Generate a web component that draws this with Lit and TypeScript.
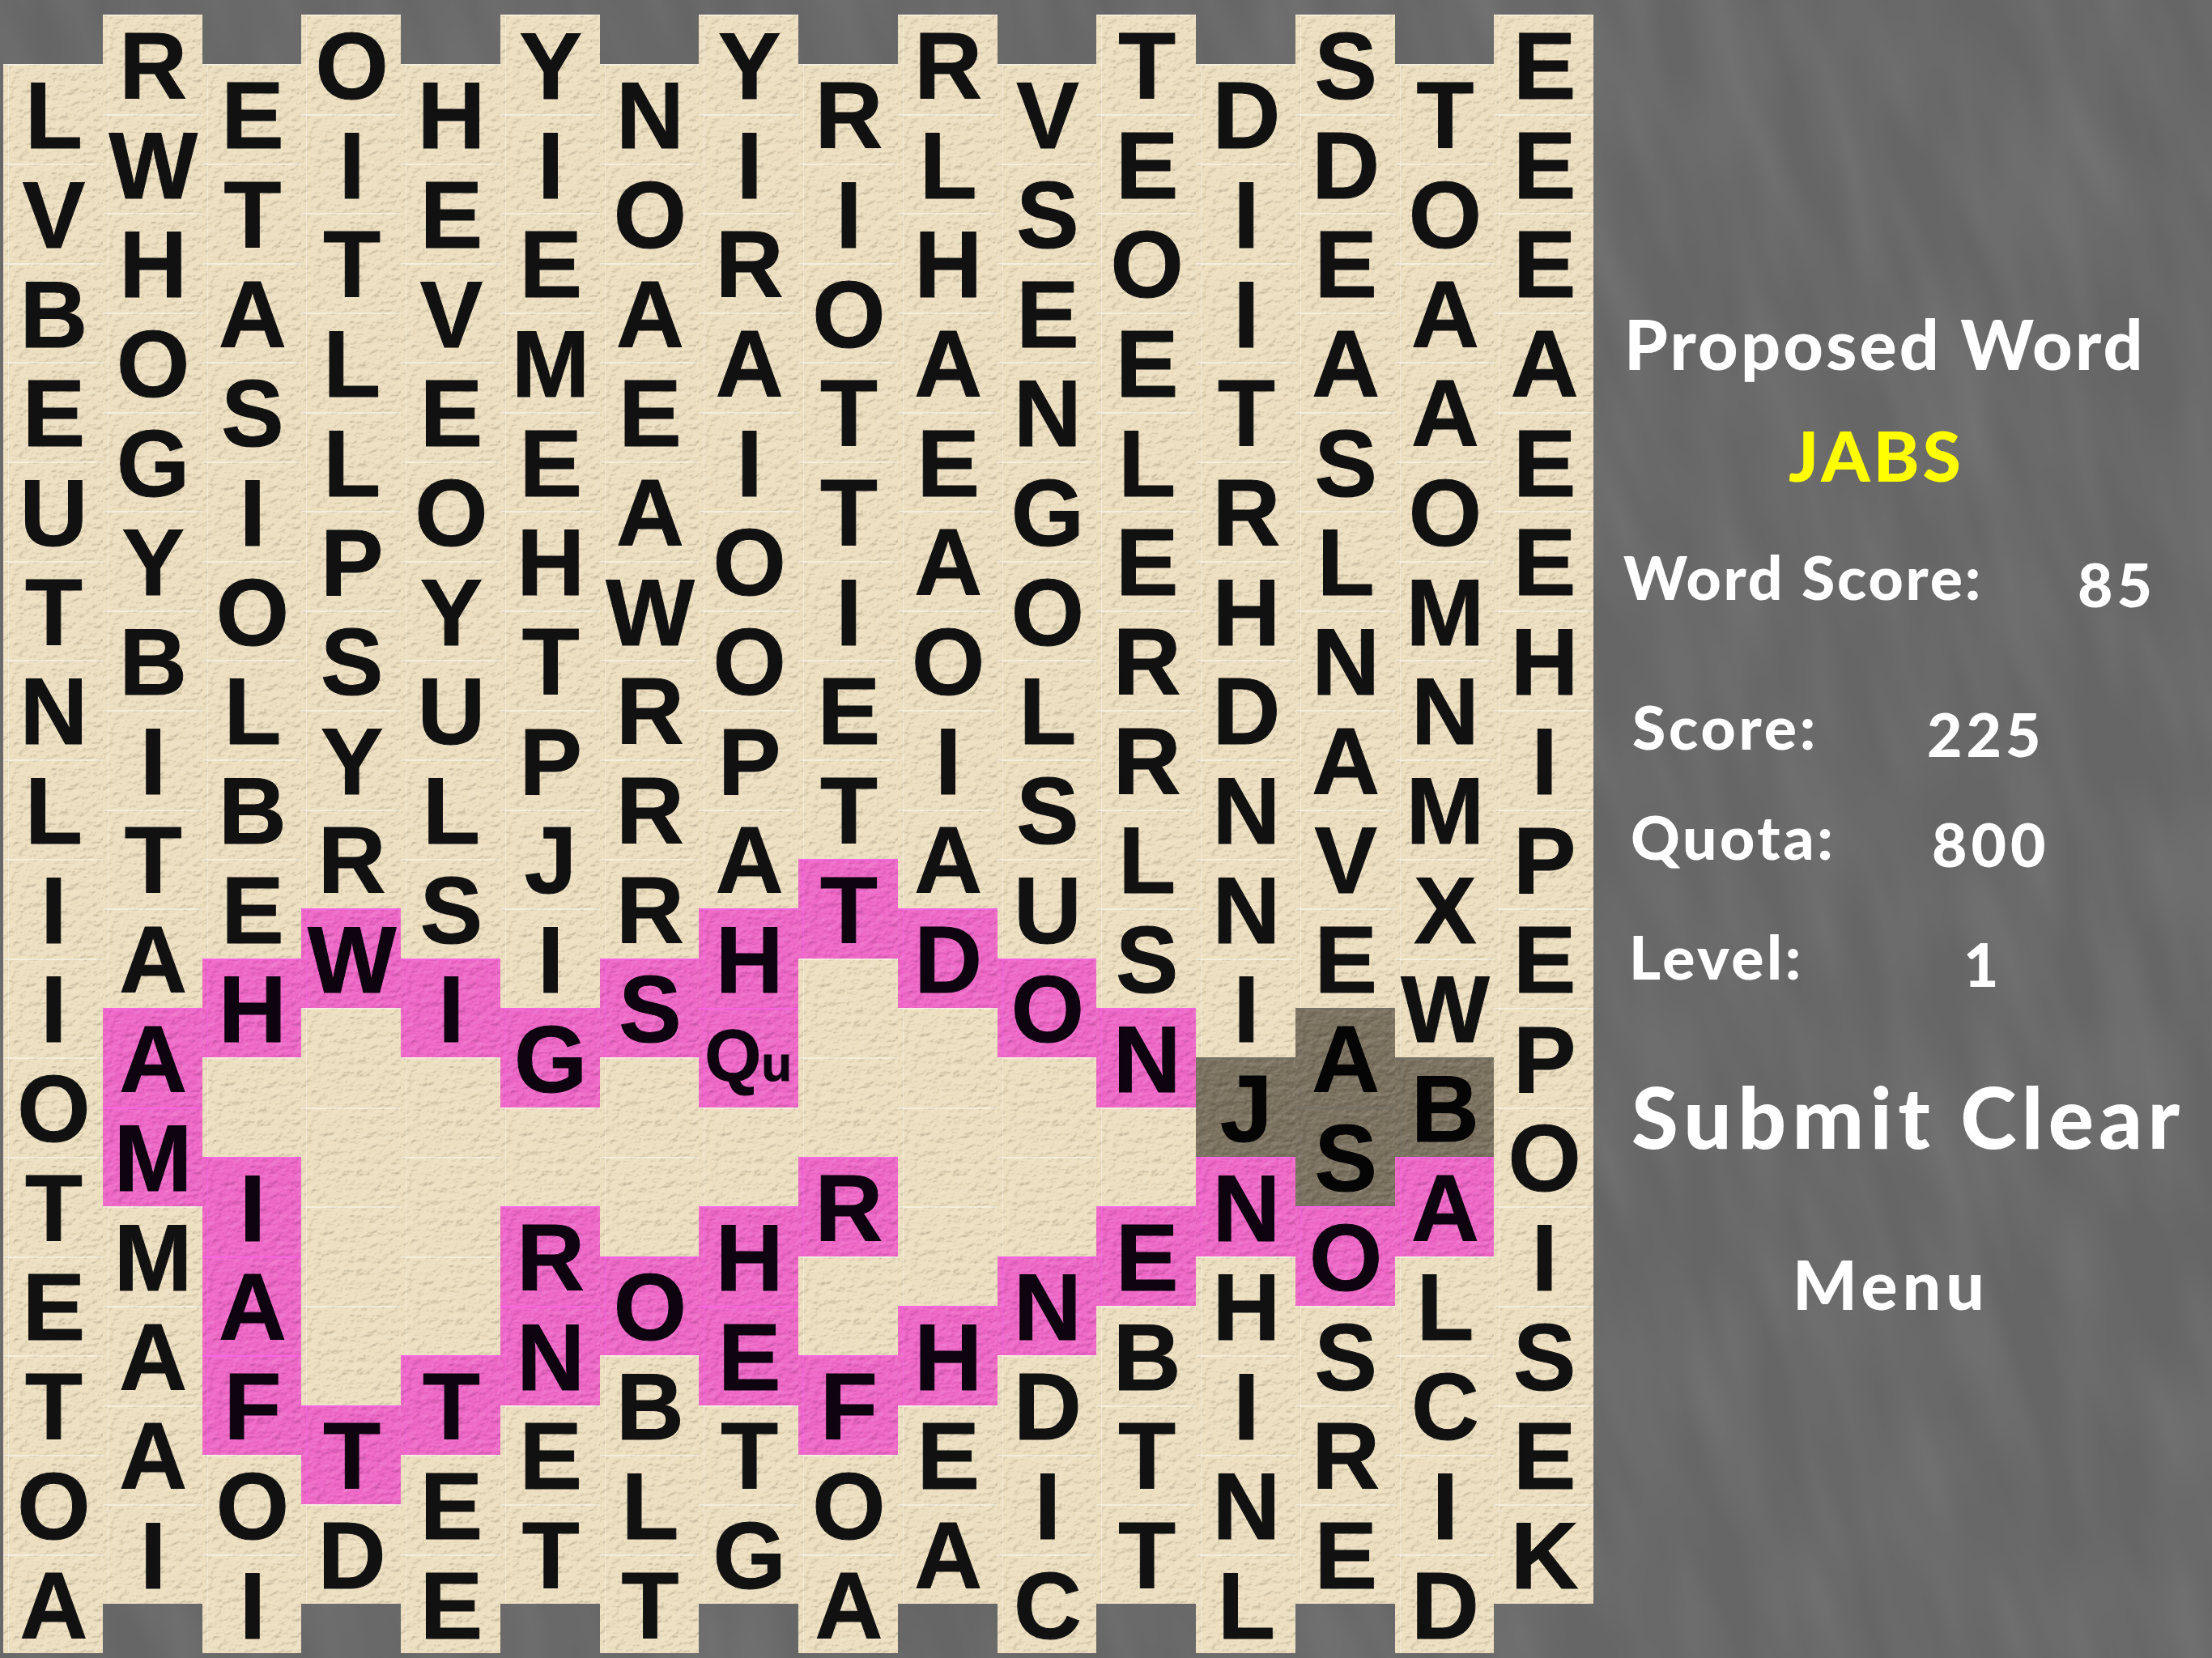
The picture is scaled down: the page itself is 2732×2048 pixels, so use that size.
import { LitElement, html, css } from "lit";
import { customElement } from "lit/decorators.js";

const COLUMNS = [
  "LVBEUTNLIIOTETOA",
  "RWHOGYBITAAMMAAI",
  "ETASIOLBEH.IAFOI",
  "OITLLPSYRW....TD",
  "HEVEOYULSI...TEE",
  "YIEMEHTPJIG.RNET",
  "NOAEAWRRRS..OBLT",
  "YIRAIOOPAHq.HETG",
  "RIOTTIETT..R.FOA",
  "RLHAEAOIAD...HEA",
  "VSENGOLSUO..NDIC",
  "TEOELERRLSN.EBTT",
  "DIITRHDNNIJNHINL",
  "SDEASLNAVEASOSRE",
  "TOAAOMNMXWBALCID",
  "EEEAEEHIPEPOISEK",
];
const PINK: Record<number, number[]> = {
  1: [10, 11], 2: [9, 11, 12, 13], 3: [9, 14], 4: [9, 13], 5: [10, 12, 13], 6: [9, 12],
  7: [9, 10, 12, 13], 8: [8, 11, 13], 9: [9, 13], 10: [9, 12], 11: [10, 12], 12: [11], 13: [12], 14: [11],
};
const DARK: Record<number, number[]> = { 12: [10], 13: [10, 11], 14: [10] };

const paper = `url("data:image/svg+xml,%3Csvg xmlns='http://www.w3.org/2000/svg' width='246' height='246'%3E%3Cfilter id='f' x='0' y='0' width='100%25' height='100%25' color-interpolation-filters='sRGB'%3E%3CfeTurbulence type='fractalNoise' baseFrequency='.045 .06' numOctaves='3' seed='7' stitchTiles='stitch'/%3E%3CfeDiffuseLighting surfaceScale='1.7' diffuseConstant='.62' lighting-color='%23fff'%3E%3CfeDistantLight azimuth='235' elevation='55'/%3E%3C/feDiffuseLighting%3E%3C/filter%3E%3Crect width='100%25' height='100%25' filter='url(%23f)'/%3E%3C/svg%3E")`;
const slate = `url("data:image/svg+xml,%3Csvg xmlns='http://www.w3.org/2000/svg' width='2732' height='2048'%3E%3Cfilter id='g' x='0' y='0' width='100%25' height='100%25' color-interpolation-filters='sRGB'%3E%3CfeTurbulence type='fractalNoise' baseFrequency='.018 .0045' numOctaves='2' seed='11'/%3E%3CfeColorMatrix values='0 0 0 0 1 0 0 0 0 1 0 0 0 0 1 .13 0 0 0 -.04'/%3E%3C/filter%3E%3Crect x='-600' y='-600' width='4000' height='3400' transform='rotate(-15 1366 1024)' filter='url(%23g)'/%3E%3C/svg%3E")`;

@customElement("app-root")
export class AppRoot extends LitElement {
  static styles = css`
    :host {
      display: flex;
      width: 2732px;
      height: 2048px;
      overflow: hidden;
      background-color: #666666;
      background-image: ${css([slate] as unknown as TemplateStringsArray)};
      font-family: "Liberation Sans", Arial, sans-serif;
    }
    .board {
      display: flex;
      flex: none;
      width: 1964px;
      margin-left: 4px;
      padding-top: 18px;
    }
    .col {
      display: flex;
      flex-direction: column;
      flex: none;
      width: 122.75px;
    }
    .col.low {
      padding-top: 61.35px;
    }
    .tile {
      --tint: #eddfc0;
      display: flex;
      flex: none;
      align-items: center;
      justify-content: center;
      box-sizing: border-box;
      height: 122.7px;
      padding-top: 5px;
      padding-left: 2px;
      font-size: 116px;
      font-weight: 700;
      line-height: 1;
      -webkit-text-stroke: 1px currentColor;
      color: #111111;
      background-color: var(--tint);
      background-image:
        linear-gradient(rgba(255, 255, 255, 0.45), rgba(255, 255, 255, 0.45)),
        linear-gradient(rgba(255, 255, 255, 0.35), rgba(255, 255, 255, 0.35)),
        ${css([paper] as unknown as TemplateStringsArray)};
      background-size: 100% 2px, 1px 100%, 123px 123px;
      background-position: 0 0, 6px 0, 0 0;
      background-repeat: no-repeat, no-repeat, repeat;
      background-blend-mode: normal, normal, hard-light;
    }
    .tile.pink {
      --tint: #ee66c6;
      color: #0e0410;
      background-image:
        linear-gradient(rgba(250, 100, 235, 0.8), rgba(250, 100, 235, 0.8)),
        linear-gradient(rgba(250, 100, 235, 0.6), rgba(250, 100, 235, 0.6)),
        ${css([paper] as unknown as TemplateStringsArray)};
    }
    .tile.dark {
      --tint: #7a705e;
      color: #050505;
      background-image:
        linear-gradient(rgba(115, 115, 105, 0.8), rgba(115, 115, 105, 0.8)),
        linear-gradient(rgba(115, 115, 105, 0.6), rgba(115, 115, 105, 0.6)),
        ${css([paper] as unknown as TemplateStringsArray)};
    }
    .qu {
      display: flex;
      align-items: baseline;
      margin-top: -9px;
      margin-left: -3px;
      font-size: 90px;
    }
    .qu-small {
      font-size: 62px;
    }
    .panel {
      display: flex;
      flex-direction: column;
      flex: none;
      padding-top: 381px;
      font-family: Lato, "Noto Sans", sans-serif;
      font-weight: 900;
      color: #ffffff;
      line-height: 1;
      white-space: nowrap;
    }
    .row {
      display: flex;
      flex: none;
      align-items: flex-start;
      height: 75px;
      font-size: 75px;
    }
    .title {
      height: 86px;
      margin-left: 38px;
      font-size: 86px;
      letter-spacing: 3.2px;
    }
    .word {
      height: 86px;
      margin-top: 52px;
      margin-left: 241px;
      font-size: 86px;
      letter-spacing: 4px;
      color: #ffff00;
    }
    .word-score {
      margin-top: 70px;
      margin-left: 37px;
      letter-spacing: 2.8px;
    }
    .score {
      margin-top: 110px;
      margin-left: 48px;
      letter-spacing: 3.8px;
    }
    .quota {
      margin-top: 61px;
      margin-left: 46px;
      letter-spacing: 3.6px;
    }
    .level {
      margin-top: 73px;
      margin-left: 44px;
      letter-spacing: 3.6px;
    }
    .label {
      flex: none;
    }
    .value {
      flex: none;
      margin-top: 9px;
      letter-spacing: 5px;
    }
    .word-score .label { width: 561px; }
    .score .label { width: 364px; }
    .quota .label { width: 372px; }
    .level .label { width: 413px; }
    .actions {
      height: 105px;
      margin-top: 107px;
      margin-left: 47px;
      font-size: 105px;
      letter-spacing: 7.4px;
      gap: 30px;
    }
    .clear {
      letter-spacing: 6.3px;
    }
    .menu {
      height: 84px;
      margin-top: 113px;
      margin-left: 246px;
      font-size: 84px;
      letter-spacing: 6px;
    }
  `;

  private tileClass(c: number, r: number) {
    if (PINK[c]?.includes(r)) return "tile pink";
    if (DARK[c]?.includes(r)) return "tile dark";
    return "tile";
  }

  render() {
    return html`
      <div class="board">
        ${COLUMNS.map(
          (letters, c) => html`
            <div class="col ${c % 2 === 0 ? "low" : ""}">
              ${[...letters].map(
                (ch, r) => html`
                  <div class=${this.tileClass(c, r)}>
                    ${ch === "q"
                      ? html`<span class="qu">Q<span class="qu-small">u</span></span>`
                      : ch === "."
                        ? ""
                        : ch}
                  </div>
                `,
              )}
            </div>
          `,
        )}
      </div>
      <div class="panel">
        <div class="row title">Proposed Word</div>
        <div class="row word">JABS</div>
        <div class="row word-score"><span class="label">Word Score:</span><span class="value">85</span></div>
        <div class="row score"><span class="label">Score:</span><span class="value">225</span></div>
        <div class="row quota"><span class="label">Quota:</span><span class="value">800</span></div>
        <div class="row level"><span class="label">Level:</span><span class="value">1</span></div>
        <div class="row actions"><span>Submit</span><span class="clear">Clear</span></div>
        <div class="row menu">Menu</div>
      </div>
    `;
  }
}
